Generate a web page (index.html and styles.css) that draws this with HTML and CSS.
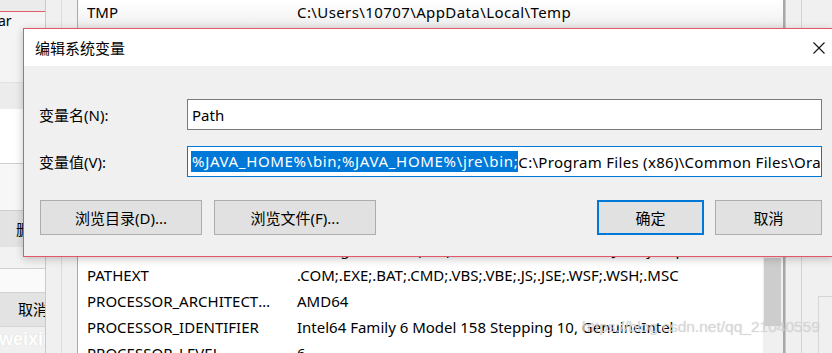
FILE: index.html
```html
<!doctype html>
<html lang="zh-CN">
<head>
	<meta charset="UTF-8">
	<title>编辑系统变量</title>
	<link rel="stylesheet" href="styles.css">
</head>
<body>
	<div class="screen">
		<div class="side">
			<div class="side-top"></div>
			<div class="side-a">ar</div>
			<div class="side-b"></div>
			<div class="side-c"></div>
			<div class="side-d"></div>
			<div class="side-btn">删除</div>
			<div class="side-e"></div>
			<div class="side-f"></div>
			<div class="side-btn cancel">取消</div>
			<div class="side-g"><span class="mark-left">weixin</span></div>
		</div>
		<div class="strip"></div>
		<div class="strip dark"></div>
		<div class="list">
			<div class="row top"><span class="name">TMP</span><span class="value path">C:\Users\10707\AppData\Local\Temp</span></div>
			<div class="row"><span class="name">asl.log</span><span class="value">Destination=file</span></div>
			<div class="row"><span class="name">CLASSPATH</span><span class="value">.;%JAVA_HOME%\lib;%JAVA_HOME%\lib\tools.jar</span></div>
			<div class="row"><span class="name">ComSpec</span><span class="value">C:\WINDOWS\system32\cmd.exe</span></div>
			<div class="row"><span class="name">DriverData</span><span class="value">C:\Windows\System32\Drivers\DriverData</span></div>
			<div class="row"><span class="name">JAVA_HOME</span><span class="value">C:\Program Files\Java\jdk1.8.0_191</span></div>
			<div class="row"><span class="name">NUMBER_OF_PROCESSORS</span><span class="value">6</span></div>
			<div class="row"><span class="name">OS</span><span class="value">Windows_NT</span></div>
			<div class="row"><span class="name">PSModulePath</span><span class="value">%ProgramFiles%\WindowsPowerShell\Modules</span></div>
			<div class="row"><span class="name">Path</span><span class="value">C:\Program Files (x86)\Common Files\Oracle\Java\javapath;</span></div>
			<div class="row"><span class="name">PATHEXT</span><span class="value">.COM;.EXE;.BAT;.CMD;.VBS;.VBE;.JS;.JSE;.WSF;.WSH;.MSC</span></div>
			<div class="row"><span class="name">PROCESSOR_ARCHITECTURE</span><span class="value">AMD64</span></div>
			<div class="row"><span class="name">PROCESSOR_IDENTIFIER</span><span class="value">Intel64 Family 6 Model 158 Stepping 10, GenuineIntel</span></div>
			<div class="row"><span class="name">PROCESSOR_LEVEL</span><span class="value">6</span></div>
		</div>
		<div class="vscroll">
			<div class="vs-top"></div>
			<div class="vs-track"><div class="thumb"></div></div>
		</div>
		<div class="edge"></div>
		<div class="strip"></div>
		<div class="strip last"><div class="last-line"></div></div>
	</div>

	<div class="dialog">
		<div class="titlebar">
			<span class="title">编辑系统变量</span>
			<svg class="close" width="12" height="12" viewBox="0 0 12 12"><path d="M0.5 0.5L11.5 11.5M11.5 0.5L0.5 11.5" stroke="#111" stroke-width="1.1" fill="none"/></svg>
		</div>
		<div class="content">
			<div class="field">
				<label>变量名(N):</label>
				<div class="input">Path</div>
			</div>
			<div class="field">
				<label>变量值(V):</label>
				<div class="input focus"><span class="sel">%JAVA_HOME%\bin;%JAVA_HOME%\jre\bin;</span><span class="caret"></span><span class="rest">C:\Program Files (x86)\Common Files\Oracle\Java\javapath</span></div>
			</div>
			<div class="buttons">
				<div class="btn wide">浏览目录(D)...</div>
				<div class="btn wide">浏览文件(F)...</div>
				<div class="btn ok">确定</div>
				<div class="btn">取消</div>
			</div>
		</div>
	</div>

	<div class="mark">https://blog.csdn.net/qq_21040559</div>
</body>
</html>
```

FILE: styles.css
```css
body {
	margin: 0;
	padding: 0;
	width: 832px;
	height: 353px;
	overflow: hidden;
	position: relative;
	font-family: "Noto Sans", "Noto Sans CJK SC", sans-serif;
	font-size: 15px;
	color: #000;
	background: #f0f0f0;
}
.screen {
	display: flex;
	height: 353px;
}

/* window behind, left part */
.side {
	width: 45px;
	flex: none;
	position: relative;
	overflow: hidden;
	background: #f0f0f0;
}
.side-top {
	height: 11px;
	background: #ebebeb;
	border-bottom: 1px solid #e35a6a;
}
.side-a {
	height: 70px;
	background: #f4f4f4;
	font-size: 14px;
	line-height: 14px;
	padding-top: 2px;
	box-sizing: border-box;
	margin-left: -2px;
}
.side-b {
	height: 26px;
	background: #ececec;
	border-top: 1px solid #e2e2e2;
}
.side-c {
	height: 54px;
	background: #fff;
	border-bottom: 1px solid #cfcfcf;
}
.side-d {
	height: 46px;
	background: #f7f7f7;
	border-bottom: 1px solid #cfcfcf;
}
.side-btn {
	height: 36px;
	background: #e3e3e3;
	line-height: 36px;
	padding-left: 16px;
	white-space: nowrap;
	font-size: 15px;
}
.side-e {
	height: 21px;
	background: #f2f2f2;
	border-bottom: 1px solid #d0d0d0;
}
.side-f {
	height: 23px;
	background: #fafafa;
	border-bottom: 1px solid #d0d0d0;
}
.side-btn.cancel {
	height: 33px;
	line-height: 33px;
	padding-left: 18px;
	border-bottom: 1px solid #d6d6d6;
}
.side-g {
	height: 40px;
	background: #f0f0f0;
	position: relative;
}
.mark-left {
	position: absolute;
	left: -1px;
	top: 2px;
	font-family: "Liberation Sans", sans-serif;
	font-weight: bold;
	font-size: 18px;
	color: #fff;
	text-shadow: 0 0 1px #d0d0d0;
}

.strip {
	width: 15px;
	flex: none;
	background: #f0f0f0;
	border-left: 1px solid #c9c9c9;
}
.strip.dark {
	border-left-color: #dadada;
	border-right: 1px solid #a9a9a9;
}

/* list behind the dialog */
.list {
	width: 685px;
	flex: none;
	background: #fff;
	overflow: hidden;
}
.row {
	display: flex;
	height: 26px;
	align-items: center;
	padding-left: 9px;
	white-space: nowrap;
}
.row.top {
	height: 28px;
	padding-bottom: 4px;
	box-sizing: border-box;
	background: linear-gradient(#ffffff, #f6f6f6 60%, #e9e9e9);
	width: 708px;
}
.name {
	width: 194px;
	flex: none;
	overflow: hidden;
	text-overflow: ellipsis;
	margin-right: 16px;
}
.value {
	flex: none;
}
.value.path {
	letter-spacing: 0.4px;
}

.vscroll {
	width: 20px;
	flex: none;
	display: flex;
	flex-direction: column;
	background: #f0f0f0;
}
.vs-top {
	height: 28px;
	background: linear-gradient(#ffffff, #f6f6f6 60%, #e9e9e9);
}
.vs-track {
	flex: 1;
	padding: 230px 2px 0 1px;
}
.thumb {
	height: 68px;
	background: #cdcdcd;
}
.edge {
	width: 2px;
	flex: none;
	background: #a8a8a8;
}
.strip.last {
	flex: 1;
	border-left-color: #d4d4d4;
	padding-top: 296px;
	box-sizing: border-box;
}
.last-line {
	border-top: 1px solid #d6d6d6;
	margin-left: 16px;
	border-left: 1px solid #d6d6d6;
	height: 60px;
}

/* dialog */
.dialog {
	position: absolute;
	left: 23px;
	top: 28px;
	width: 810px;
	height: 229px;
	box-sizing: border-box;
	border: 1px solid #e2586a;
	background: #f0f0f0;
	box-shadow: 0 2px 8px rgba(0, 0, 0, 0.22);
	display: flex;
	flex-direction: column;
}
.titlebar {
	height: 37px;
	flex: none;
	background: #fff;
	display: flex;
	align-items: center;
	justify-content: space-between;
	padding: 0 7px 0 11px;
}
.title {
	font-size: 15px;
}
.close {
	display: block;
}
.content {
	flex: 1;
	padding: 33px 10px 21px 16px;
	display: flex;
	flex-direction: column;
	gap: 16px;
}
.field {
	display: grid;
	grid-template-columns: 147px 1fr;
	align-items: center;
}
label {
	margin-left: -1px;
	margin-top: -1px;
}
.input {
	height: 31px;
	box-sizing: border-box;
	border: 1px solid #7a7a7a;
	background: #fff;
	padding: 0 4px;
	display: flex;
	align-items: center;
	white-space: nowrap;
	overflow: hidden;
}
.input.focus {
	border-color: #0078d7;
}
.sel {
	background: #0078d7;
	color: #fff;
	line-height: 21px;
	margin-left: -1px;
	padding-left: 1px;
	letter-spacing: 0.66px;
}
.caret {
	width: 1px;
	height: 21px;
	background: #f08020;
}
.rest {
	letter-spacing: 0.3px;
}
.buttons {
	display: flex;
	gap: 12px;
	margin-top: 7px;
}
.btn {
	width: 107px;
	height: 35px;
	box-sizing: border-box;
	border: 1px solid #adadad;
	background: #e1e1e1;
	display: flex;
	align-items: center;
	justify-content: center;
	white-space: nowrap;
}
.btn.wide {
	width: 162px;
}
.btn.ok {
	margin-left: auto;
	border: 2px solid #0078d7;
	margin-right: -1px;
}

/* watermark */
.mark {
	position: absolute;
	left: 582px;
	top: 318px;
	font-family: "Liberation Sans", sans-serif;
	font-size: 15.5px;
	color: rgba(215, 215, 215, 0.85);
	text-shadow: 0 0 1px rgba(180, 180, 180, 0.5);
	white-space: nowrap;
}
```
